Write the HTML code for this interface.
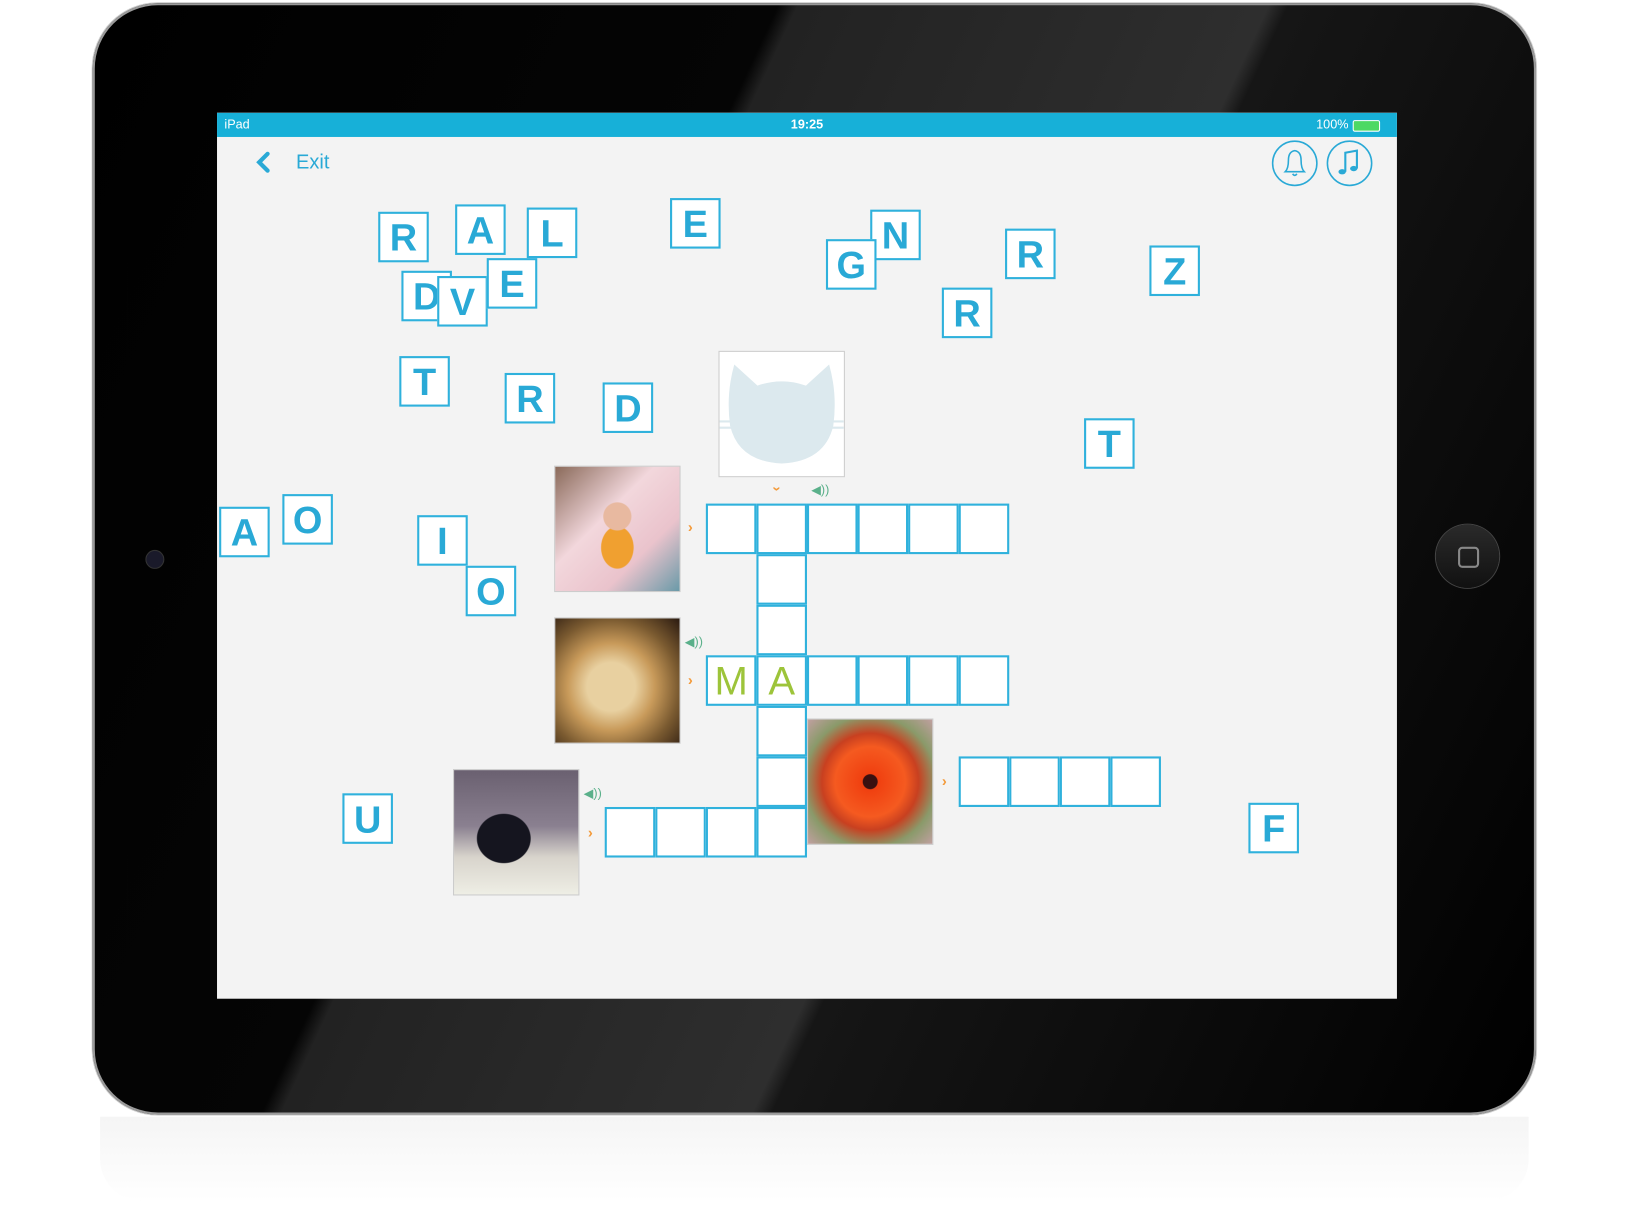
<!DOCTYPE html>
<html><head><meta charset="utf-8"><style>
html,body{margin:0;padding:0;background:#fff;width:1652px;height:1217px;overflow:hidden}
#w{position:absolute;left:0;top:0;width:1560px;height:1149px;transform:scale(1.0535);transform-origin:0 0;font-family:"Liberation Sans",sans-serif}
.ipad{position:absolute;left:88px;top:3px;width:1370px;height:1055px;border-radius:62px;background:linear-gradient(115deg,#000 0%,#050505 35%,#222 36%,#2e2e2e 60%,#161616 61%,#000 100%);box-shadow:0 0 0 2px #9a9a9a inset,0 0 0 1px #cfcfcf}
.refl{position:absolute;left:95px;top:1060px;width:1356px;height:80px;background:linear-gradient(#eee,#fff);border-radius:0 0 40px 40px;opacity:.6}
.screen{position:absolute;left:206px;top:107px;width:1120px;height:841px;background:#f3f3f3;overflow:hidden}
.sb{position:absolute;left:0;top:0;width:100%;height:23px;background:#17b0d8;color:#fff;font-size:12px;line-height:23px}
.t{position:absolute;width:44px;height:44px;border:2px solid #2fb1dc;background:#fff;color:#29a9d6;font-weight:bold;font-size:36px;text-align:center;line-height:46px;box-sizing:content-box}
.c{position:absolute;width:44px;height:44px;border:2px solid #2fb1dc;background:#fff;color:#9dc43a;font-size:38px;text-align:center;line-height:46px}
.img{position:absolute;width:118px;height:118px;border:1px solid #ccc}
.ar{position:absolute;color:#f39a3a;font-size:14px;font-weight:bold}
.sp{position:absolute;color:#5ab08a;font-size:12px}
</style></head><body><div id="w">
<div class="refl"></div>
<div class="ipad"></div>
<div style="position:absolute;left:138px;top:522px;width:16px;height:16px;border-radius:50%;background:#1a1a2a;border:1px solid #333"></div>
<div style="position:absolute;left:1363px;top:498px;width:60px;height:60px;border-radius:50%;background:linear-gradient(#2a2a2a,#111);box-shadow:0 0 0 1px #444"><div style="position:absolute;left:21px;top:21px;width:16px;height:16px;border:2px solid #888;border-radius:4px"></div></div>
<div class="screen">
<div class="sb"><span style="position:absolute;left:7px">iPad</span><span style="position:absolute;left:0;right:0;text-align:center;font-weight:bold">19:25</span><span style="position:absolute;right:46px">100%</span><span style="position:absolute;right:16px;top:7px;width:24px;height:9px;background:#4cd964;border:1px solid #fff;border-radius:2px"></span></div>
<svg style="position:absolute;left:36px;top:36px" width="16" height="22"><path d="M12 3 L4 11 L12 19" stroke="#29a9d6" stroke-width="4" fill="none" stroke-linecap="round"/></svg>
<div style="position:absolute;left:75px;top:37px;color:#29a9d6;font-size:19px">Exit</div>
<svg style="position:absolute;left:1000px;top:25px" width="100" height="46"><circle cx="23" cy="23" r="21" fill="none" stroke="#29a9d6" stroke-width="1.5"/><path d="M14 31 Q17 28 17 20 Q17 12 23 11 Q29 12 29 20 Q29 28 32 31 Z M21 33 Q23 36 25 33" fill="none" stroke="#29a9d6" stroke-width="1.5"/><circle cx="75" cy="23" r="21" fill="none" stroke="#29a9d6" stroke-width="1.5"/><path d="M71 31 V13 L82 11 V28" fill="none" stroke="#29a9d6" stroke-width="2"/><ellipse cx="68" cy="31" rx="3.5" ry="2.5" fill="#29a9d6"/><ellipse cx="79" cy="28" rx="3.5" ry="2.5" fill="#29a9d6"/></svg>
</div>
<div id="g" style="position:absolute;left:0;top:0">
<div class="t" style="left:359px;top:201px">R</div>
<div class="t" style="left:432px;top:194px">A</div>
<div class="t" style="left:500px;top:197px">L</div>
<div class="t" style="left:381px;top:257px">D</div>
<div class="t" style="left:415px;top:262px">V</div>
<div class="t" style="left:462px;top:245px">E</div>
<div class="t" style="left:636px;top:188px">E</div>
<div class="t" style="left:826px;top:199px">N</div>
<div class="t" style="left:784px;top:227px">G</div>
<div class="t" style="left:954px;top:217px">R</div>
<div class="t" style="left:1091px;top:233px">Z</div>
<div class="t" style="left:894px;top:273px">R</div>
<div class="t" style="left:379px;top:338px">T</div>
<div class="t" style="left:479px;top:354px">R</div>
<div class="t" style="left:572px;top:363px">D</div>
<div class="t" style="left:1029px;top:397px">T</div>
<div class="t" style="left:208px;top:481px">A</div>
<div class="t" style="left:268px;top:469px">O</div>
<div class="t" style="left:396px;top:489px">I</div>
<div class="t" style="left:442px;top:537px">O</div>
<div class="t" style="left:325px;top:753px">U</div>
<div class="t" style="left:1185px;top:762px">F</div>

<div class="img" style="left:682px;top:333px;background:#fff"><svg width="118" height="118"><path d="M14 12 L36 32 Q59 24 82 32 L104 12 Q112 40 108 70 Q100 104 59 106 Q18 104 10 70 Q6 40 14 12 Z" fill="#dce9ee"/><path d="M106 66 H118 M106 72 H118 M12 66 H0 M12 72 H0" stroke="#dce9ee" stroke-width="2"/></svg></div>
<div class="img" style="left:526px;top:442px;background:radial-gradient(circle at 50% 40%,#e8b9a0 0 14%,transparent 15%),radial-gradient(ellipse at 50% 65%,#f0a030 0 18%,transparent 19%),linear-gradient(135deg,#8a6a5a,#f2d7dc 40%,#eac3cc 70%,#6a9aa8)"></div>
<div class="img" style="left:526px;top:586px;background:radial-gradient(ellipse at 45% 55%,#e8d0a0 0 25%,#c89a5a 45%,#7a5a30 70%,#2a1a10)"></div>
<div class="img" style="left:430px;top:730px;background:radial-gradient(ellipse at 40% 55%,#15151f 0 25%,transparent 26%),linear-gradient(#6a6070,#8a8090 45%,#d8d4cc 70%,#eeeee5)"></div>
<div class="img" style="left:766px;top:682px;background:radial-gradient(circle at 50% 50%,#3a1010 0 8%,#f04010 9%,#f55a20 40%,#c84020 55%,#8a9a6a 75%,#c0a0a0)"></div>

<div class="c" style="left:670px;top:478px"></div><div class="c" style="left:718px;top:478px"></div><div class="c" style="left:766px;top:478px"></div><div class="c" style="left:814px;top:478px"></div><div class="c" style="left:862px;top:478px"></div><div class="c" style="left:910px;top:478px"></div>
<div class="c" style="left:718px;top:526px"></div><div class="c" style="left:718px;top:574px"></div>
<div class="c" style="left:670px;top:622px">M</div><div class="c" style="left:718px;top:622px">A</div><div class="c" style="left:766px;top:622px"></div><div class="c" style="left:814px;top:622px"></div><div class="c" style="left:862px;top:622px"></div><div class="c" style="left:910px;top:622px"></div>
<div class="c" style="left:718px;top:670px"></div><div class="c" style="left:718px;top:718px"></div>
<div class="c" style="left:574px;top:766px"></div><div class="c" style="left:622px;top:766px"></div><div class="c" style="left:670px;top:766px"></div><div class="c" style="left:718px;top:766px"></div>
<div class="c" style="left:910px;top:718px"></div><div class="c" style="left:958px;top:718px"></div><div class="c" style="left:1006px;top:718px"></div><div class="c" style="left:1054px;top:718px"></div>

<div class="ar" style="left:653px;top:492px">›</div>
<div class="ar" style="left:653px;top:637px">›</div>
<div class="ar" style="left:558px;top:782px">›</div>
<div class="ar" style="left:894px;top:733px">›</div>
<div class="ar" style="left:736px;top:456px;transform:rotate(90deg)">›</div>
<div class="sp" style="left:770px;top:458px">◀))</div>
<div class="sp" style="left:650px;top:602px">◀))</div>
<div class="sp" style="left:554px;top:746px">◀))</div>
</div>
</div></body></html>
